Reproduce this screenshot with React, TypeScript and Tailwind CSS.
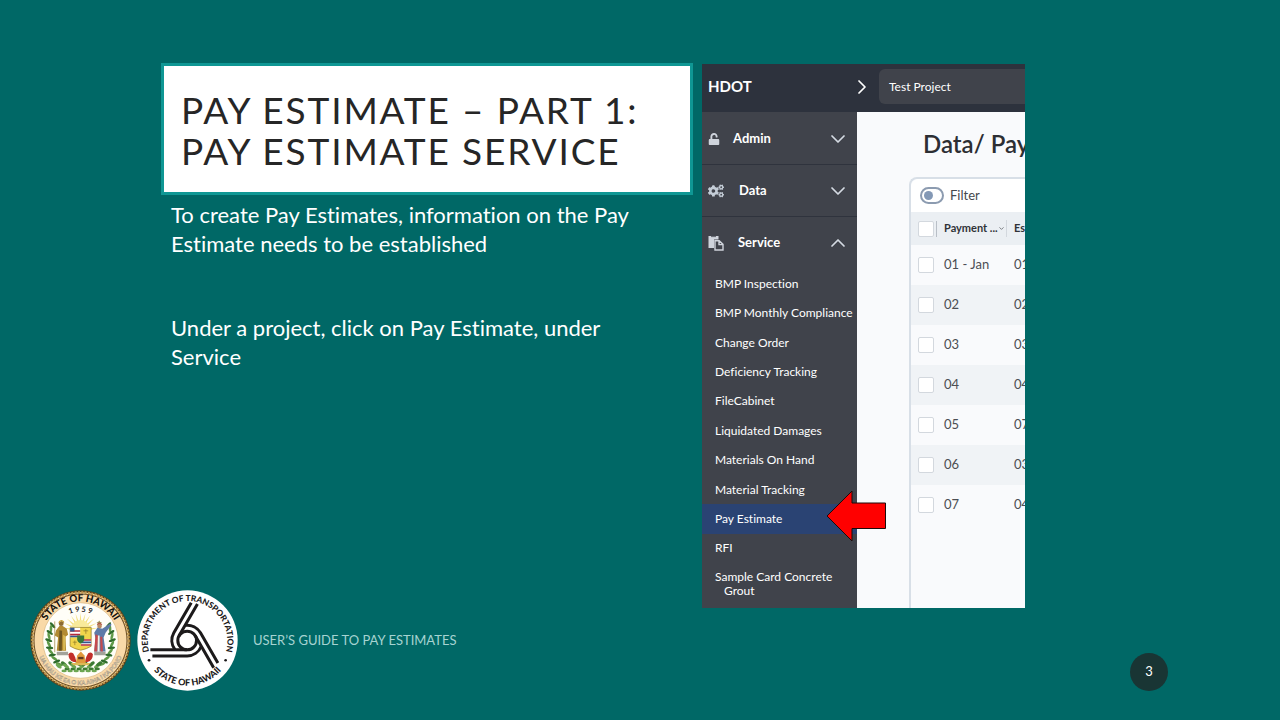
import { FaCogs, FaUnlock } from 'react-icons/fa';
import { ChevronDown, ChevronRight, ChevronUp } from 'lucide-react';

const serviceItems = [
  'BMP Inspection',
  'BMP Monthly Compliance',
  'Change Order',
  'Deficiency Tracking',
  'FileCabinet',
  'Liquidated Damages',
  'Materials On Hand',
  'Material Tracking',
  'Pay Estimate',
  'RFI',
];

const payments = [
  { name: '01 - Jan', estimate: '01' },
  { name: '02', estimate: '02' },
  { name: '03', estimate: '03' },
  { name: '04', estimate: '04' },
  { name: '05', estimate: '07' },
  { name: '06', estimate: '03' },
  { name: '07', estimate: '04' },
];

const StateSeal = () => {
  const leaves = [0, 1, 2, 3, 4, 5, 6, 7, 8, 9, 10, 11];
  const rays = [-80, -64, -48, -32, -16, 0, 16, 32, 48, 64, 80];

  return (
    <svg
      viewBox="30 30 302 302"
      className="size-[101px] shrink-0"
      role="img"
      aria-label="State of Hawaii seal"
    >
      <defs>
        <path id="stateTop" d="M 63 182 A 118 118 0 0 1 299 182" />
        <path id="stateYear" d="M 94 182 A 87 87 0 0 1 268 182" />
        <path id="stateMotto" d="M 49 182 A 132 132 0 0 0 313 182" />
      </defs>
      <circle cx="181" cy="181" r="150" fill="#57431f" />
      <circle
        cx="181"
        cy="181"
        r="144"
        fill="#f9d9a8"
        stroke="#c49a4e"
        strokeWidth="7"
        strokeDasharray="6 4"
      />
      <circle cx="181" cy="181" r="139" fill="none" stroke="#6d4f24" strokeWidth="3" />
      <circle cx="181" cy="181" r="113" fill="#fffef8" stroke="#d9b67c" strokeWidth="2" />
      <g fontFamily="Lato, sans-serif" textAnchor="middle">
        <text fontSize="29" fontWeight="900" fill="#14110c">
          <textPath href="#stateTop" startOffset="50%">
            STATE OF HAWAII
          </textPath>
        </text>
        <text fontSize="22" fontWeight="700" fill="#222222">
          <textPath href="#stateYear" startOffset="50%">
            1 9 5 9
          </textPath>
        </text>
        <text fontSize="18" fontWeight="700" fill="#f3dfbb" stroke="#8f8779" strokeWidth="1">
          <textPath href="#stateMotto" startOffset="50%">
            UA MAU KE EA O KA AINA I KA PONO
          </textPath>
        </text>
      </g>
      <path d="M122 126 l3 -5 3 5 5 1 -4 4 1 5 -5 -3 -5 3 1 -5 -4 -4 z" fill="#9c8d55" />
      <path d="M234 126 l3 -5 3 5 5 1 -4 4 1 5 -5 -3 -5 3 1 -5 -4 -4 z" fill="#9c8d55" />
      {rays.map((angle) => (
        <path
          key={angle}
          d="M176 150 L181 98 L186 150 Z"
          fill="#f3df7d"
          transform={`rotate(${angle} 181 152)`}
        />
      ))}
      <circle cx="181" cy="148" r="28" fill="#f8ea9a" />
      {leaves.map((leaf) => (
        <g key={leaf} fill={leaf % 2 ? '#5f9a48' : '#2f6b2c'}>
          <ellipse
            cx="86"
            cy="180"
            rx="11"
            ry="4"
            transform={`rotate(${28 - leaf * 7} 181 181) rotate(${leaf % 2 ? 70 : 20} 86 180)`}
          />
          <ellipse
            cx="276"
            cy="180"
            rx="11"
            ry="4"
            transform={`rotate(${leaf * 7 - 28} 181 181) rotate(${leaf % 2 ? -70 : -20} 276 180)`}
          />
        </g>
      ))}
      {leaves.map((leaf) => (
        <g key={leaf} fill={leaf % 2 ? '#3c7a33' : '#6da652'}>
          <ellipse
            cx={118 + leaf * 11}
            cy={leaf % 2 ? 250 : 258}
            rx="10"
            ry="5"
            transform={`rotate(${leaf < 6 ? 35 : -35} ${118 + leaf * 11} 254)`}
          />
          <ellipse cx={132 + leaf * 9} cy={leaf % 2 ? 266 : 272} rx="8" ry="4" />
        </g>
      ))}
      {/* Kamehameha on the left, Liberty on the right */}
      <path d="M108 150 l10 -12 10 0 12 8 4 18 -8 6 2 42 h-28 l4 -40 -10 -6 z" fill="#b28a32" />
      <path d="M118 150 l8 2 -1 60 h-9 z" fill="#6b5420" />
      <path d="M129 164 l7 4 -1 42 h-6 z" fill="#d9b955" />
      <circle cx="123" cy="131" r="7" fill="#8d6b32" />
      <path d="M116 128 q7 -12 15 -2" fill="none" stroke="#c89e35" strokeWidth="4" />
      <path d="M104 124 v92" stroke="#9b7b36" strokeWidth="2" />
      <path d="M110 215 h34 v10 h-34 z M222 215 h34 v10 h-34 z" fill="#a3a39a" />
      <path d="M222 158 l10 -16 14 4 24 -16 4 4 -18 24 -6 14 6 42 h-34 l4 -40 z" fill="#5d7ba8" />
      <path d="M226 162 l8 4 -3 48 h-9 z M240 170 l6 0 2 44 h-7 z" fill="#c54a4c" />
      <path d="M233 166 l5 0 0 48 h-6 z" fill="#f4f1e6" />
      <circle cx="238" cy="138" r="7" fill="#b78963" />
      <path d="M231 134 q7 -9 14 0" fill="none" stroke="#b9493f" strokeWidth="3" />
      <path
        d="M150 142 h63 v56 q-12 8 -31 12 q-20 -4 -32 -12 z"
        fill="#f1d54b"
        stroke="#8b7727"
        strokeWidth="2"
      />
      <path d="M150 143 h30 v28 h-30 z M182 177 h31 v20 h-31 z" fill="#ffffff" />
      <path
        d="M150 150 h30 v5 h-30 z M150 161 h30 v5 h-30 z M182 177 h31 v5 h-31 z M182 192 h31 v5 h-31 z"
        fill="#b52b39"
      />
      <path d="M150 143 h13 v11 h-13 z M150 167 h30 v4 h-30 z M182 184 h31 v5 h-31 z" fill="#35568f" />
      <path d="M190 152 h14 M197 147 v14 M158 186 h12 M164 181 v14" stroke="#8b7727" strokeWidth="2" />
      <path d="M171 166 h21 v11 q0 8 -10 13 q-11 -5 -11 -13 z" fill="#397838" />
      <path d="M145 222 q4 -8 14 -3 q6 8 10 26 h-8 q-16 -4 -16 -23 z" fill="#c22f2a" />
      <path d="M218 222 q-4 -8 -14 -3 q-6 8 -10 26 h8 q16 -4 16 -23 z" fill="#c22f2a" />
      <path d="M167 248 l4 -22 11 -12 11 12 4 22 z" fill="#e09a3c" />
      <path d="M174 230 h16 v7 h-16 z" fill="#5d3a20" />
      <path d="M152 248 h60 l-8 7 h-44 z" fill="#dcb956" />
    </svg>
  );
};

const TransportationSeal = () => {
  return (
    <svg
      viewBox="22 30 302 302"
      className="size-[101px] shrink-0"
      role="img"
      aria-label="Department of Transportation seal"
    >
      <defs>
        <path id="dotTop" d="M 68 238 A 119 119 0 1 1 278 238" />
        <path id="dotBottom" d="M 38 181 A 135 135 0 0 0 308 181" />
      </defs>
      <circle cx="173" cy="181" r="150" fill="#ffffff" />
      <g
        fontFamily="Lato, sans-serif"
        fontSize="25"
        fontWeight="900"
        fill="#1c1a1b"
        textAnchor="middle"
      >
        <text>
          <textPath href="#dotTop" startOffset="50%">
            DEPARTMENT OF TRANSPORTATION
          </textPath>
        </text>
        <text fontSize="27">
          <textPath href="#dotBottom" startOffset="50%">
            STATE OF HAWAII
          </textPath>
        </text>
      </g>
      <circle cx="58" cy="240" r="4" fill="#1c1a1b" />
      <circle cx="287" cy="240" r="4" fill="#1c1a1b" />
      <g fill="none" stroke="#1c1a1b" strokeWidth="9">
        <circle cx="172" cy="181" r="28" />
        {[0, 120, 240].map((angle) => (
          <path
            key={angle}
            d="M62 209 H172 M68 227 H172 A46 46 0 0 0 214 199"
            transform={`rotate(${angle} 172 181)`}
          />
        ))}
      </g>
    </svg>
  );
};

const PasteIcon = () => {
  return (
    <svg viewBox="0 0 16 16" className="size-4 shrink-0" aria-hidden="true">
      <path d="M0.5 1 H10.5 V4.5 H6 V13 H0.5 Z" fill="#cfd4dc" />
      <path d="M3 1.6 H8" stroke="#40434c" strokeWidth="0.8" />
      <path
        d="M7 5.7 H11.2 L15 9.4 V15 H7 Z M11 5.7 V9.6 H15"
        fill="none"
        stroke="#cfd4dc"
        strokeWidth="1.4"
      />
    </svg>
  );
};

const Sidebar = () => {
  const sectionClass =
    'flex h-[52px] w-full items-center border-[#2f333d] pl-[6px] pr-[7px] text-[13px] font-bold text-white';

  return (
    <nav className="flex w-[155px] shrink-0 flex-col bg-[#40434b] pt-px">
      <button type="button" className={`${sectionClass} border-b`}>
        <FaUnlock size={12} className="text-[#cfd4dc]" />
        <span className="ml-[13px] flex-1 text-left">Admin</span>
        <ChevronDown size={24} strokeWidth={1.75} className="text-[#d5dbe3]" />
      </button>
      <button type="button" className={`${sectionClass} border-b`}>
        <FaCogs size={16} className="text-[#c3ccd6]" />
        <span className="ml-[15px] flex-1 text-left">Data</span>
        <ChevronDown size={24} strokeWidth={1.75} className="text-[#d5dbe3]" />
      </button>
      <button type="button" className={sectionClass}>
        <PasteIcon />
        <span className="ml-[14px] flex-1 text-left">Service</span>
        <ChevronUp size={24} strokeWidth={1.75} className="text-[#d5dbe3]" />
      </button>
      <ul className="flex flex-1 flex-col text-[12px] text-white">
        {serviceItems.map((item) => (
          <li
            key={item}
            className={`flex flex-1 items-center pl-[13px] whitespace-nowrap ${
              item === 'Pay Estimate' ? 'bg-[#2a4373]' : ''
            }`}
          >
            <a href="#">{item}</a>
          </li>
        ))}
        <li className="h-[45px] pt-[7px] pr-4 pl-[22px] leading-[14px]">
          <a href="#" className="block -indent-[9px]">
            Sample Card Concrete Grout
          </a>
        </li>
      </ul>
    </nav>
  );
};

const PaymentTable = () => {
  const checkboxClass =
    'block size-4 appearance-none rounded-[2px] border border-[#d3d8de] bg-white';

  return (
    <div className="ml-[52px] flex-1 rounded-tl-lg border-t-2 border-l-2 border-[#d8dfe7] bg-[#f9fafc]">
      <div className="flex h-[33px] items-center rounded-tl-lg bg-white pl-[9px]">
        <label className="flex items-center gap-[6px] text-[13px] text-[#45484d]">
          <input type="checkbox" className="peer sr-only" />
          <span className="flex h-[17px] w-6 items-center rounded-full border-2 border-[#8c9bb0] bg-white pl-[2px]">
            <span className="size-[9px] rounded-full bg-[#8398b5]" />
          </span>
          Filter
        </label>
      </div>
      <table className="w-[150px] table-fixed text-left text-[13px] text-[#4b4e53]">
        <thead>
          <tr className="h-[33px] bg-[#ebeff3] text-[11px] text-[#303338]">
            <th className="w-[26px] pl-[7px]">
              <span className="flex border-r border-[#b9bfc7]">
                <input type="checkbox" aria-label="Select all" className={checkboxClass} />
              </span>
            </th>
            <th className="w-[70px] pl-[7px] whitespace-nowrap">
              <span className="flex items-center border-r border-[#d3d8de]">
                Payment ...
                <ChevronDown size={7} />
              </span>
            </th>
            <th className="pl-[7px]">Es</th>
          </tr>
        </thead>
        <tbody>
          {payments.map((payment) => (
            <tr key={payment.name} className="h-10 even:bg-[#f0f3f6]">
              <td className="pl-[7px]">
                <input type="checkbox" aria-label={payment.name} className={checkboxClass} />
              </td>
              <td className="pl-[7px]">{payment.name}</td>
              <td className="pl-[7px]">{payment.estimate}</td>
            </tr>
          ))}
        </tbody>
      </table>
    </div>
  );
};

const ProjectScreen = () => {
  return (
    <section className="relative flex h-[544px] min-w-0 flex-col overflow-hidden">
      <header className="flex h-12 shrink-0 items-center bg-[#2d323d] pb-[3px] text-white">
        <span className="w-[148px] shrink-0 pl-[6px] text-[15px] font-bold">HDOT</span>
        <ChevronRight size={24} strokeWidth={1.75} className="shrink-0" />
        <span className="ml-[5px] flex h-[35px] flex-1 items-center rounded-l-md bg-[#40434b] pl-[10px] text-[12px]">
          Test Project
        </span>
      </header>
      <div className="flex min-h-0 flex-1">
        <Sidebar />
        <div className="flex min-w-0 flex-1 flex-col overflow-hidden bg-[#f9fafc]">
          <h2 className="pt-4 pb-[17px] pl-[66px] text-[24px] leading-8 font-semibold whitespace-nowrap text-[#2c2e33]">
            Data/ Pay
          </h2>
          <PaymentTable />
        </div>
      </div>
      <svg viewBox="0 0 60 52" className="absolute top-[426px] left-[124px] h-[52px] w-[60px]">
        <path
          d="M1 26 L26 1 V13 H59.5 V38.5 H26 V51 Z"
          fill="#ff0000"
          stroke="#1c0a0a"
          strokeWidth="1"
        />
      </svg>
    </section>
  );
};

const App = () => {
  return (
    <div className="flex min-h-screen flex-col bg-[#006866] font-[Lato,sans-serif] [font-variant-ligatures:none]">
      <main className="-mb-[18px] grid grid-cols-[532fr_323fr] items-start gap-[9px] pt-16 pr-[255px] pl-[161px]">
        <div>
          <h1 className="-mt-px border-3 border-[#0f9794] bg-white px-[17px] pt-[23px] pb-[21px] text-[37px] leading-[41px] tracking-wider text-[#262626] uppercase">
            Pay Estimate – Part 1:
            <br />
            Pay Estimate Service
          </h1>
          <div className="flex flex-col gap-[55px] pt-[5px] pl-[10px] text-[22px] leading-[29px] text-white">
            <p>
              To create Pay Estimates, information on the Pay
              <br />
              Estimate needs to be established
            </p>
            <p>
              Under a project, click on Pay Estimate, under
              <br />
              Service
            </p>
          </div>
        </div>
        <ProjectScreen />
      </main>
      <footer className="mt-auto flex items-center pr-28 pb-[29px] pl-[30px]">
        <StateSeal />
        <div className="ml-[6px]">
          <TransportationSeal />
        </div>
        <p className="ml-[15px] text-[13px] text-[#a6d3d1]">USER’S GUIDE TO PAY ESTIMATES</p>
        <span className="ml-auto flex size-[38px] items-center justify-center self-end rounded-full bg-[#193534] text-[13px] text-white">
          3
        </span>
      </footer>
    </div>
  );
};

export default App;
